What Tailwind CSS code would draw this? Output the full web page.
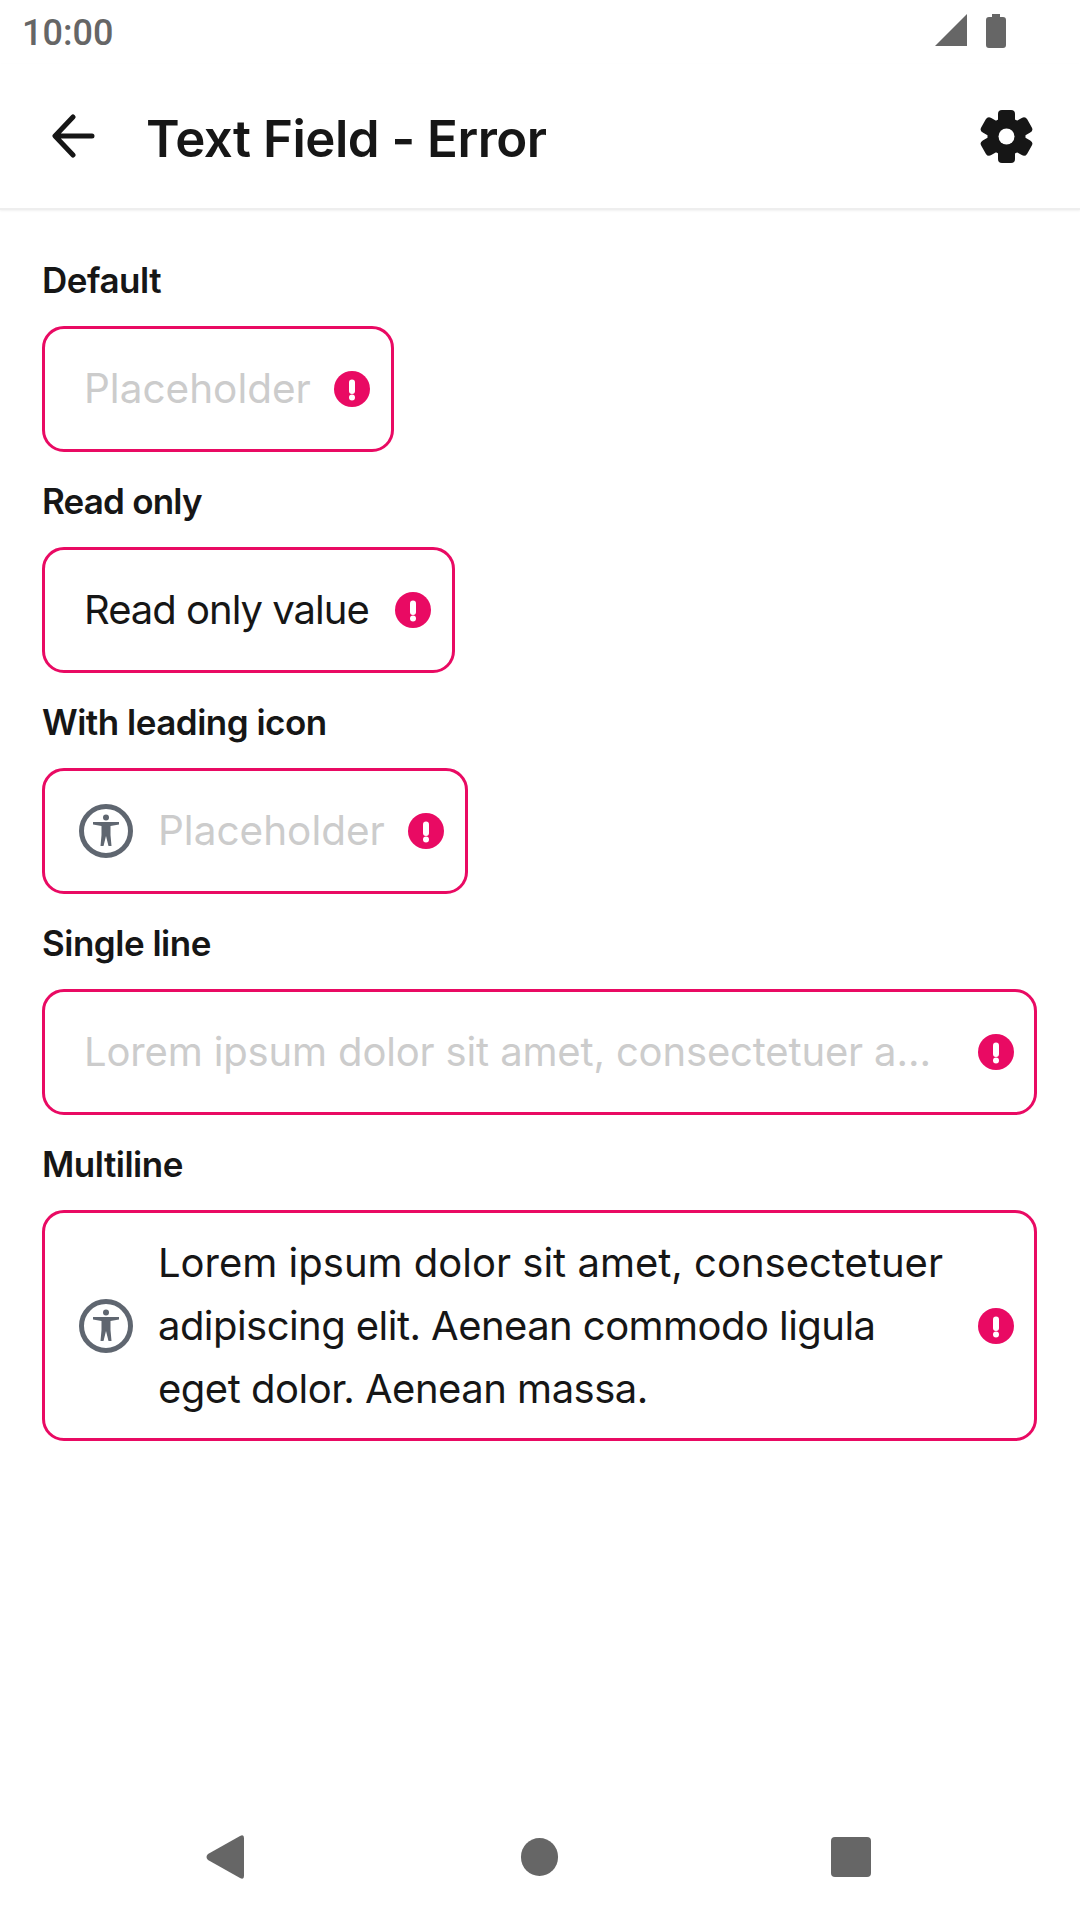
<!DOCTYPE html>
<html lang="en">
<head>
    <meta charset="UTF-8">
    <title>Text Field - Error</title>
    <script src="https://cdn.jsdelivr.net/npm/@tailwindcss/browser@4"></script>
</head>
<body class="bg-white">
    <div class="w-[1080px] h-[1920px] flex flex-col font-['Inter',sans-serif] text-[#161616]">
        <!-- status bar -->
        <div class="h-[64px] shrink-0 flex items-center justify-between pl-[22px] pr-[74px] text-[#666666]">
            <span class="font-['Roboto',sans-serif] font-medium text-[36px] leading-none mt-[2px]">10:00</span>
            <div class="flex items-start gap-[19px] self-start mt-[14px]">
                <svg width="32" height="32" viewBox="0 0 32 32" class="fill-[#666666]"><path d="M0 32 L32 0 V32 Z"/></svg>
                <svg width="20" height="34" viewBox="0 0 20 34" class="fill-[#666666]"><path d="M6 0 H14 V3 H17 Q20 3 20 6 V31 Q20 34 17 34 H3 Q0 34 0 31 V6 Q0 3 3 3 H6 Z"/></svg>
            </div>
        </div>
        <!-- app bar -->
        <div class="h-[146px] shrink-0 flex items-center justify-between pl-[52px] pr-[47px] border-b-2 border-[#eeeeee] shadow-[0_1px_2px_rgba(0,0,0,0.06)]">
            <div class="flex items-center gap-[51px]">
                <svg width="43" height="44" viewBox="0 0 43 44" fill="none" class="stroke-[#161616]" stroke-width="5" stroke-linecap="round" stroke-linejoin="round"><path d="M21 3 L3 22 L21 41 M4 22 H40"/></svg>
                <span class="font-semibold text-[51px] leading-none tracking-[-0.5px] mt-[5px]">Text Field - Error</span>
            </div>
            <svg width="53" height="53" viewBox="0 0 53 53" class="fill-[#161616]">
                <circle cx="26.5" cy="26.5" r="19"/>
                <rect x="18" y="0" width="17" height="53" rx="4"/>
                <rect x="18" y="0" width="17" height="53" rx="4" transform="rotate(60 26.5 26.5)"/>
                <rect x="18" y="0" width="17" height="53" rx="4" transform="rotate(120 26.5 26.5)"/>
                <circle cx="26.5" cy="26.5" r="8" fill="#fff"/>
            </svg>
        </div>
        <!-- fields -->
        <div class="flex-1 flex flex-col items-start pl-[42px] pt-[46px] gap-[25px]">
            <div>
                <div class="h-[48px] flex items-center text-[35px] font-semibold tracking-[-0.5px] mb-[22px]">Default</div>
                <div class="w-[352px] h-[126px] flex items-center justify-between pl-[39px] pr-[21px] border-[3px] border-[#e90a63] rounded-[22px]">
                    <span class="text-[40.5px] text-[#cccccc] whitespace-nowrap">Placeholder</span>
                    <svg width="36" height="36" viewBox="0 0 36 36"><circle cx="18" cy="18" r="18" fill="#e90a63"/><rect x="15" y="8.5" width="6" height="14.5" rx="3" fill="#fff"/><circle cx="18" cy="26.5" r="3" fill="#fff"/></svg>
                </div>
            </div>
            <div>
                <div class="h-[48px] flex items-center text-[35px] font-semibold tracking-[-0.8px] mb-[22px]">Read only</div>
                <div class="w-[413px] h-[126px] flex items-center justify-between pl-[39px] pr-[21px] border-[3px] border-[#e90a63] rounded-[22px]">
                    <span class="text-[40px] tracking-[-1px] whitespace-nowrap">Read only value</span>
                    <svg width="36" height="36" viewBox="0 0 36 36"><circle cx="18" cy="18" r="18" fill="#e90a63"/><rect x="15" y="8.5" width="6" height="14.5" rx="3" fill="#fff"/><circle cx="18" cy="26.5" r="3" fill="#fff"/></svg>
                </div>
            </div>
            <div>
                <div class="h-[48px] flex items-center text-[35px] font-semibold tracking-[-0.5px] mb-[22px]">With leading icon</div>
                <div class="w-[426px] h-[126px] flex items-center justify-between pl-[34px] pr-[21px] border-[3px] border-[#e90a63] rounded-[22px]">
                    <svg width="54" height="54" viewBox="0 0 54 54"><circle cx="27" cy="27" r="24.5" fill="none" stroke="#5f6670" stroke-width="5"/><circle cx="27" cy="13.5" r="3" fill="#5f6670"/><path d="M14 18 H40 V20.5 L31.5 22 V31 L32.5 42 H29.5 L27 32 L24.5 42 H21.5 L22.5 31 V22 L14 20.5 Z" fill="#5f6670"/></svg>
                    <span class="ml-[25px] flex-1 text-[40.5px] text-[#cccccc] whitespace-nowrap">Placeholder</span>
                    <svg width="36" height="36" viewBox="0 0 36 36"><circle cx="18" cy="18" r="18" fill="#e90a63"/><rect x="15" y="8.5" width="6" height="14.5" rx="3" fill="#fff"/><circle cx="18" cy="26.5" r="3" fill="#fff"/></svg>
                </div>
            </div>
            <div>
                <div class="h-[48px] flex items-center text-[35px] font-semibold tracking-[-0.5px] mb-[22px]">Single line</div>
                <div class="w-[995px] h-[126px] flex items-center justify-between pl-[39px] pr-[20px] border-[3px] border-[#e90a63] rounded-[22px]">
                    <span class="text-[40px] tracking-[-0.15px] text-[#cccccc] whitespace-nowrap">Lorem ipsum dolor sit amet, consectetuer a…</span>
                    <svg width="36" height="36" viewBox="0 0 36 36"><circle cx="18" cy="18" r="18" fill="#e90a63"/><rect x="15" y="8.5" width="6" height="14.5" rx="3" fill="#fff"/><circle cx="18" cy="26.5" r="3" fill="#fff"/></svg>
                </div>
            </div>
            <div>
                <div class="h-[48px] flex items-center text-[35px] font-semibold tracking-[-0.5px] mb-[22px]">Multiline</div>
                <div class="w-[995px] h-[231px] flex items-center justify-between pl-[34px] pr-[20px] border-[3px] border-[#e90a63] rounded-[22px]">
                    <svg width="54" height="54" viewBox="0 0 54 54"><circle cx="27" cy="27" r="24.5" fill="none" stroke="#5f6670" stroke-width="5"/><circle cx="27" cy="13.5" r="3" fill="#5f6670"/><path d="M14 18 H40 V20.5 L31.5 22 V31 L32.5 42 H29.5 L27 32 L24.5 42 H21.5 L22.5 31 V22 L14 20.5 Z" fill="#5f6670"/></svg>
                    <p class="ml-[25px] flex-1 text-[40px] leading-[63px]">Lorem ipsum dolor sit amet, consectetuer<br><span class="tracking-[-0.55px]">adipiscing elit. Aenean commodo ligula</span><br><span class="tracking-[-0.5px]">eget dolor. Aenean massa.</span></p>
                    <svg width="36" height="36" viewBox="0 0 36 36"><circle cx="18" cy="18" r="18" fill="#e90a63"/><rect x="15" y="8.5" width="6" height="14.5" rx="3" fill="#fff"/><circle cx="18" cy="26.5" r="3" fill="#fff"/></svg>
                </div>
            </div>
        </div>
        <!-- nav bar -->
        <div class="h-[132px] shrink-0 flex items-center pl-[206px] pt-[5px]">
            <svg width="38" height="44" viewBox="0 0 38 44" class="fill-[#666666]"><path d="M34 1 Q38 -1 38 3 V41 Q38 45 34 43 L2 25 Q-1 22 2 19 Z"/></svg>
            <div class="w-[37px] h-[38px] ml-[277px] rounded-full bg-[#666666]"></div>
            <div class="w-[40px] h-[40px] ml-[273px] rounded-[4px] bg-[#666666]"></div>
        </div>
    </div>
</body>
</html>
